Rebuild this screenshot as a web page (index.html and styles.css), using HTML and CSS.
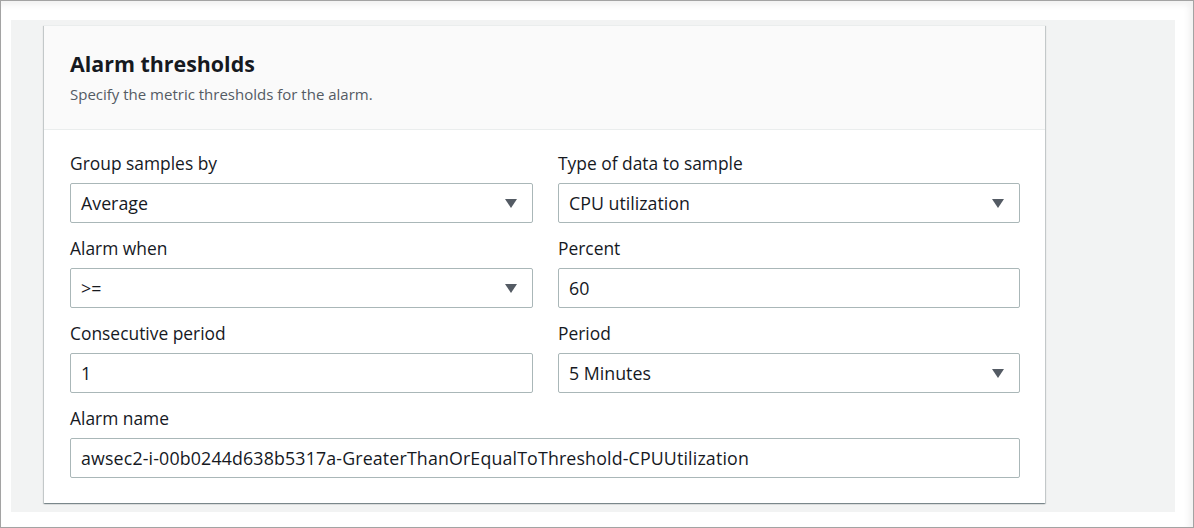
FILE: index.html
```html
<!DOCTYPE html>
<html lang="en">
<head>
<meta charset="utf-8">
<title>Alarm thresholds</title>
<link rel="stylesheet" href="styles.css">
</head>
<body>
<div class="frame">
  <div class="panel">
    <section class="card">
      <header class="card-header">
        <h2 class="title">Alarm thresholds</h2>
        <p class="desc">Specify the metric thresholds for the alarm.</p>
      </header>
      <div class="card-body">
        <div class="grid">
          <div class="field">
            <label class="label">Group samples by</label>
            <div class="control select"><span>Average</span><span class="caret"></span></div>
          </div>
          <div class="field">
            <label class="label">Type of data to sample</label>
            <div class="control select"><span>CPU utilization</span><span class="caret"></span></div>
          </div>
          <div class="field">
            <label class="label">Alarm when</label>
            <div class="control select"><span>&gt;=</span><span class="caret"></span></div>
          </div>
          <div class="field">
            <label class="label">Percent</label>
            <div class="control"><span>60</span></div>
          </div>
          <div class="field">
            <label class="label">Consecutive period</label>
            <div class="control"><span>1</span></div>
          </div>
          <div class="field">
            <label class="label">Period</label>
            <div class="control select"><span>5 Minutes</span><span class="caret"></span></div>
          </div>
          <div class="field wide">
            <label class="label">Alarm name</label>
            <div class="control"><span class="long">awsec2-i-00b0244d638b5317a-GreaterThanOrEqualToThreshold-CPUUtilization</span></div>
          </div>
        </div>
      </div>
    </section>
  </div>
</div>
</body>
</html>
```

FILE: styles.css
```css
* { box-sizing: border-box; }
html, body { margin: 0; padding: 0; }
body {
  width: 1194px;
  height: 528px;
  background: #ffffff;
  font-family: "Open Sans", "Noto Sans", sans-serif;
  color: #16191f;
  overflow: hidden;
}
.frame {
  width: 1194px;
  height: 528px;
  border: 1px solid #a3a3a3;
  padding: 19px 18px 15px 10px;
  box-shadow: inset -4px 4px 6px rgba(0,0,0,0.06);
}
.panel {
  background: #f2f3f3;
  height: 492px;
  padding: 5px 0 0 33px;
}
.card {
  width: 1001px;
  background: #ffffff;
  border-top: 1px solid #eaeded;
  box-shadow: 0 1px 1px 0 rgba(0,28,36,0.3), 1px 1px 1px 0 rgba(0,28,36,0.15), -1px 1px 1px 0 rgba(0,28,36,0.15);
}
.card-header {
  background: #fafafa;
  border-bottom: 1px solid #eaeded;
  height: 104px;
  padding: 23px 26px 0 26px;
}
.title {
  margin: 0;
  font-size: 21.4px;
  font-weight: 700;
  line-height: 30px;
  color: #16191f;
}
.desc {
  margin: 5px 0 0 0;
  font-size: 15px;
  line-height: 20px;
  color: #545b64;
}
.card-body {
  padding: 22px 25px 25px 26px;
}
.grid {
  display: grid;
  grid-template-columns: 463px 462px;
  column-gap: 25px;
  row-gap: 14px;
}
.field.wide { grid-column: 1 / 3; }
.label {
  display: block;
  font-size: 17.4px;
  line-height: 22px;
  margin-bottom: 9px;
  color: #16191f;
}
.control {
  height: 40px;
  border: 1px solid #aab7b8;
  border-radius: 2px;
  background: #ffffff;
  display: flex;
  align-items: center;
  justify-content: space-between;
  padding: 0 15px 1px 10px;
  font-size: 17.8px;
  color: #16191f;
}
.long { letter-spacing: 0.15px; }
.caret {
  width: 0;
  height: 0;
  margin-top: 1px;
  border-left: 6px solid transparent;
  border-right: 6px solid transparent;
  border-top: 9px solid #545b64;
}
```
